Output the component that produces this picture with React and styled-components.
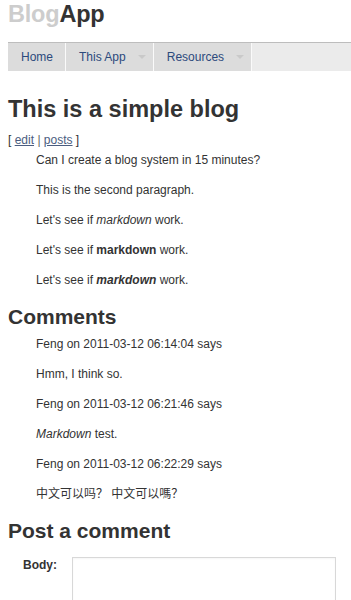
import React from 'react'
import styled, { createGlobalStyle } from 'styled-components'

/*-----------------------------------------------------------------------------
  Global
------------------------------------------------------------------------------*/
const GlobalStyle = createGlobalStyle`
  body {
    margin: 0;
    background: #fff;
    color: #333;
    font-family: "Liberation Sans", Arial, "Noto Sans CJK SC", sans-serif;
    font-size: 12px;
  }
`

const Page = styled.div`
  padding-left: 8px;
  overflow: hidden;
`

/*-----------------------------------------------------------------------------
  Header
------------------------------------------------------------------------------*/
const Logo = styled.div`
  margin: 0;
  font-size: 23.5px;
  line-height: 28px;
  font-weight: bold;
  letter-spacing: -0.2px;
  color: #333;

  span {
    color: #cdcdcd;
  }
`

/*-----------------------------------------------------------------------------
  Navigation
------------------------------------------------------------------------------*/
const NavBar = styled.nav`
  display: flex;
  margin-top: 14px;
  height: 28px;
  border-top: 1px solid #bdbdbd;
  background: #ebebeb;
`

const NavItem = styled.a`
  display: flex;
  align-items: center;
  gap: 12px;
  padding: 0 ${({ $menu }) => ($menu ? '7px' : '12px')} 0 13px;
  border-right: 1px solid #fafafa;
  background: #dcdcdc;
  color: #2c4a7c;
  font-size: 12px;
  line-height: 28px;
  text-decoration: none;
`

const Caret = styled.span`
  width: 0;
  height: 0;
  border-left: 4px solid transparent;
  border-right: 4px solid transparent;
  border-top: 4px solid #c9c9c9;
`

/*-----------------------------------------------------------------------------
  Content
------------------------------------------------------------------------------*/
const Title = styled.h1`
  margin: 24px 0 0;
  font-size: 23.5px;
  line-height: 28px;
  font-weight: bold;
  color: #333;
`

const Actions = styled.div`
  margin-top: 8px;
  font-size: 12px;
  line-height: 18px;
  color: #333;

  a {
    color: #4b5d80;
    text-decoration: underline;
  }

  em {
    font-style: normal;
    color: #666;
  }
`

const Body = styled.div`
  margin: 2px 0 0 28px;
`

const Para = styled.p`
  margin: 0 0 12px;
  font-size: 12px;
  line-height: 18px;
  color: #333;
`

const Heading = styled.h2`
  margin: 15px 0 5px;
  font-size: 21px;
  line-height: 26px;
  font-weight: bold;
  color: #333;
`

/*-----------------------------------------------------------------------------
  Form
------------------------------------------------------------------------------*/
const FormRow = styled.form`
  display: flex;
  align-items: flex-start;
  gap: 15px;
  margin: 12px 0 0 15px;
`

const Label = styled.label`
  margin-top: 0;
  font-size: 12px;
  line-height: 18px;
  font-weight: bold;
  color: #333;
`

const TextArea = styled.textarea`
  width: 264px;
  height: 110px;
  margin: 1px 0 0;
  padding: 4px;
  box-sizing: border-box;
  border: 1px solid #d8d8d8;
  box-shadow: inset 0 1px 2px rgba(0, 0, 0, 0.04);
  resize: none;
`

const comments = [
  { who: 'Feng on 2011-03-12 06:14:04 says', body: 'Hmm, I think so.' },
  { who: 'Feng on 2011-03-12 06:21:46 says', body: <><em>Markdown</em> test.</> },
  { who: 'Feng on 2011-03-12 06:22:29 says', body: '中文可以吗？ 中文可以嗎？' },
]

export default function App() {
  return (
    <Page>
      <GlobalStyle />
      <Logo><span>Blog</span>App</Logo>
      <NavBar>
        <NavItem href="#">Home</NavItem>
        <NavItem href="#" $menu>This App <Caret /></NavItem>
        <NavItem href="#" $menu>Resources <Caret /></NavItem>
      </NavBar>

      <Title>This is a simple blog</Title>
      <Actions>[ <a href="#">edit</a> <em>|</em> <a href="#">posts</a> ]</Actions>
      <Body>
        <Para>Can I create a blog system in 15 minutes?</Para>
        <Para>This is the second paragraph.</Para>
        <Para>Let's see if <em>markdown</em> work.</Para>
        <Para>Let's see if <strong>markdown</strong> work.</Para>
        <Para>Let's see if <strong><em>markdown</em></strong> work.</Para>
      </Body>

      <Heading>Comments</Heading>
      <Body>
        {comments.map((c) => (
          <React.Fragment key={c.who}>
            <Para>{c.who}</Para>
            <Para>{c.body}</Para>
          </React.Fragment>
        ))}
      </Body>

      <Heading>Post a comment</Heading>
      <FormRow>
        <Label htmlFor="body">Body:</Label>
        <TextArea id="body" name="body" />
      </FormRow>
    </Page>
  )
}
